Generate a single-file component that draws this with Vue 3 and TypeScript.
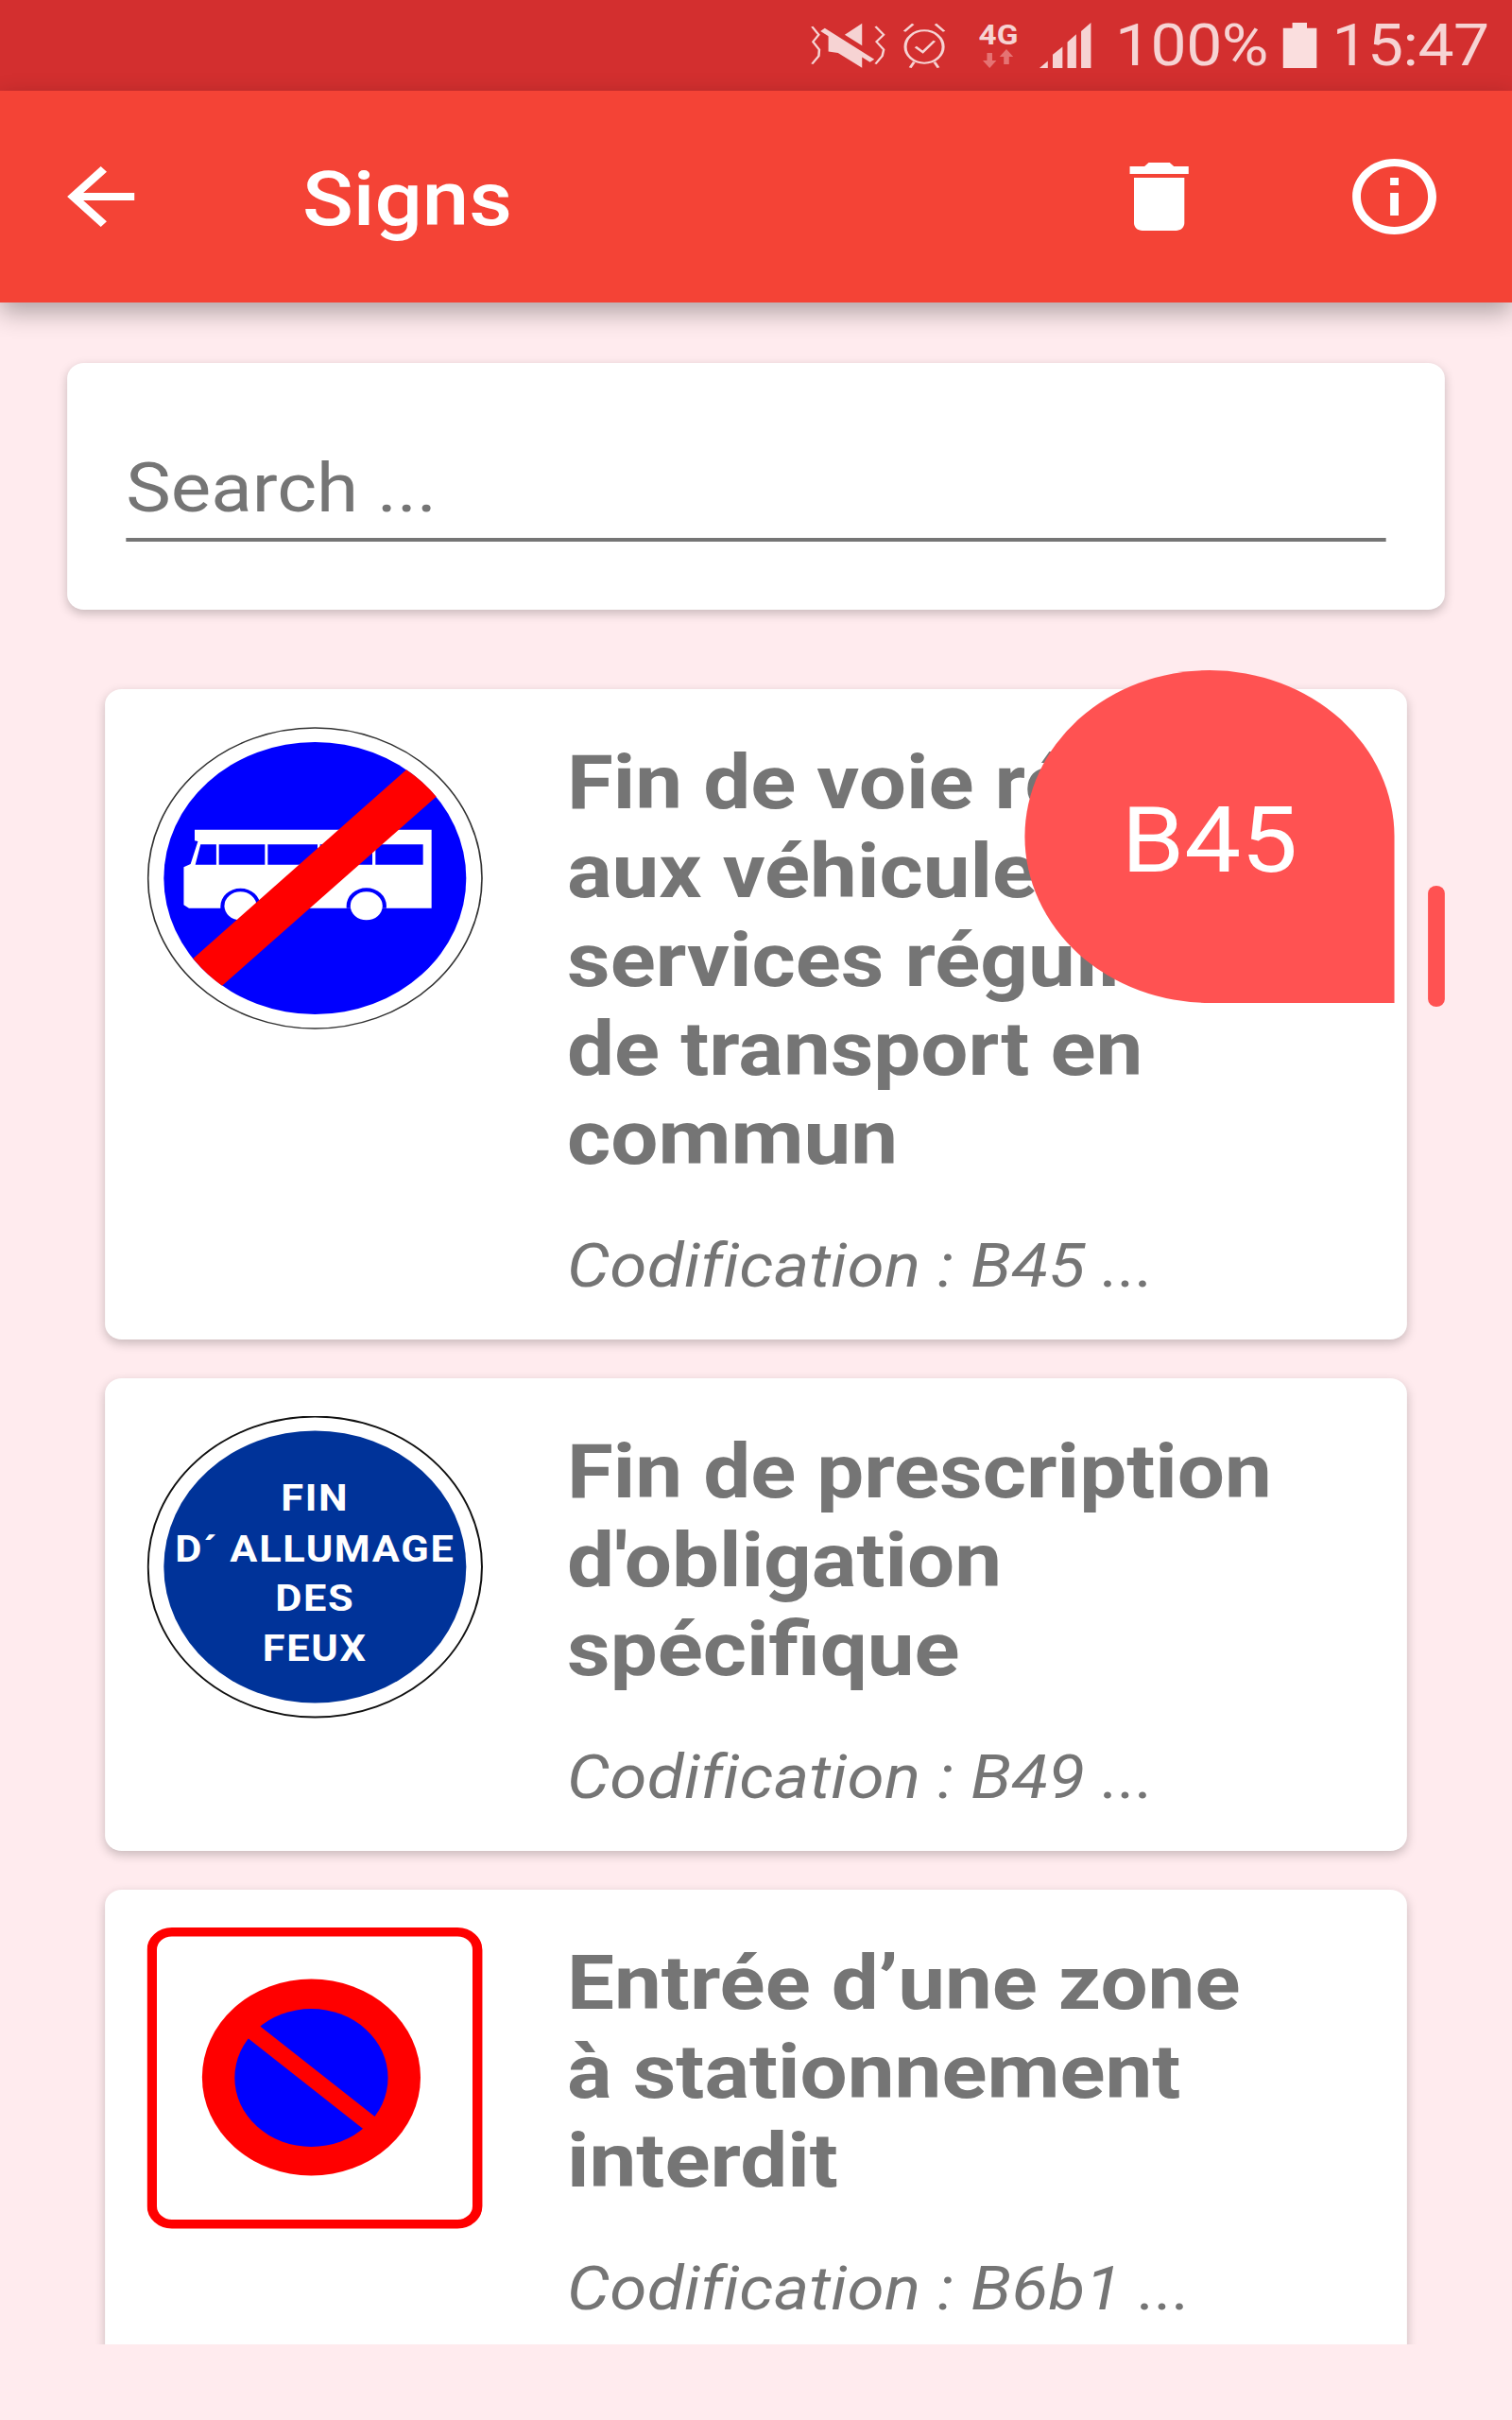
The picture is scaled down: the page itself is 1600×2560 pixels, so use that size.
<script setup lang="ts">
interface Sign {
  id: string
  kind: 'bus' | 'feux' | 'parking'
  lines: string[]
  code: string
}

const SIGNS: Sign[] = [
  {
    id: 'b45', kind: 'bus',
    lines: ['Fin de voie réservée', 'aux véhicules des', 'services réguliers', 'de transport en', 'commun'],
    code: 'Codification : B45 ...',
  },
  {
    id: 'b49', kind: 'feux',
    lines: ['Fin de prescription', "d'obligation", 'spécifique'],
    code: 'Codification : B49 ...',
  },
  {
    id: 'b6b1', kind: 'parking',
    lines: ['Entrée d’une zone', 'à stationnement', 'interdit'],
    code: 'Codification : B6b1 ...',
  },
]
</script>

<template>
  <div class="screen">
    <!-- Android status bar -->
    <div class="status">
      <svg class="st-mute" viewBox="115 70 155 143" preserveAspectRatio="none">
        <path class="st-line st-zig" d="M118 82l14 26-12 22 13 25-1 20-14 25M250 82l17 26-15 22 15 25-3 20-14 25" />
        <path class="st-fill" d="M222 72v70l-36-34zM152 104l70 68v40l-50-47-20-4z" />
        <path class="st-slash" d="M140 92l103 98" />
      </svg>
      <svg class="st-alarm" viewBox="305 68 93 145" preserveAspectRatio="none">
        <ellipse class="st-line" cx="351" cy="145" rx="39" ry="52" />
        <path class="st-line" d="M333 145l15 17 24-36M310 96l18-24M392 96l-18-24M330 194l-8 18M372 194l8 18" />
      </svg>
      <svg class="st-net" viewBox="0 0 39 50">
        <text x="0" y="24" class="st-4g">4G</text>
        <path class="st-dim" d="M8 33h5v8h4l-6.500 8-6.500-8h4zM24 45h5v-8h4l-6.500-8-6.500 8h4z" />
      </svg>
      <svg class="st-signal" viewBox="590 68 105 145" preserveAspectRatio="none">
        <path class="st-fill" d="M590 213l17-23v23zM617 213v-43l20-25v68zM647 213v-83l18-25v108zM675 213V95l20-27v145z" />
      </svg>
      <span class="st-pct">100%</span>
      <svg class="st-batt" viewBox="1083 68 69 145" preserveAspectRatio="none">
        <path class="st-batt-fill" d="M1102 68h30v17h20v128h-69V85h19z" />
      </svg>
      <span class="st-time">15:47</span>
    </div>

    <!-- Toolbar -->
    <div class="toolbar">
      <svg class="tb-icon tb-back" viewBox="0 0 24 24"><path d="M20 11H7.830l5.590-5.590L12 4l-8 8 8 8 1.410-1.410L7.830 13H20v-2z" /></svg>
      <div class="tb-title">Signs</div>
      <div class="tb-space"></div>
      <svg class="tb-icon" viewBox="0 0 24 24"><path d="M6 19c0 1.100.9 2 2 2h8c1.100 0 2-.9 2-2V7H6v12zM19 4h-3.500l-1-1h-5l-1 1H5v2h14V4z" /></svg>
      <svg class="tb-icon tb-info" viewBox="0 0 24 24"><path d="M11 7h2v2h-2zm0 4h2v6h-2zm1-9C6.480 2 2 6.480 2 12s4.480 10 10 10 10-4.480 10-10S17.520 2 12 2zm0 18c-4.410 0-8-3.590-8-8s3.590-8 8-8 8 3.590 8 8-3.590 8-8 8z" /></svg>
    </div>

    <div class="content">
      <div class="search-card">
        <input class="search-input" placeholder="Search ..." />
      </div>

      <div class="list">
        <div v-for="s in SIGNS" :key="s.id" class="card">
          <svg class="sign" viewBox="0 0 320 320">
            <g v-if="s.kind === 'bus'">
              <circle cx="160" cy="160" r="159" fill="#fff" stroke="#333" stroke-width="1.500" />
              <circle cx="160" cy="160" r="144" fill="#0000ff" />
              <path fill="#fff" d="M45.400 108.700H271v83H108v-2a19 19 0 0 0-38 0v2H40l-5-3.400v-40l6.500-3.300 7-24-3.100-.7z" />
              <path fill="#0000ff" d="M51 124.300h15v21.400H46zM68.500 124.300h43.800v21.400H68.500zM115 124.300h47.400v21.400H115zM164.800 124.300h49.800v21.400h-49.800zM217.600 124.300h45.300v21.400h-45.300z" />
              <path fill="#0000ff" d="M190 191.700v-2.400a19 19 0 0 1 38 0v2.400z" />
              <ellipse cx="89" cy="189.300" rx="15.300" ry="15" fill="#fff" />
              <ellipse cx="209" cy="189.300" rx="15.300" ry="15" fill="#fff" />
              <path fill="#ff0000" d="M247 45.300A144 144 0 0 1 275.500 73.700L71.500 273.700A144 144 0 0 1 43.900 245z" />
            </g>
            <g v-else-if="s.kind === 'feux'">
              <circle cx="160" cy="159.500" r="159" fill="#fff" stroke="#111" stroke-width="1.800" />
              <circle cx="160" cy="159.500" r="144" fill="#003399" />
              <text class="sign-text" x="160" y="100">FIN</text>
              <text class="sign-text" x="160" y="154">D´ ALLUMAGE</text>
              <text class="sign-text" x="160" y="206">DES</text>
              <text class="sign-text" x="160" y="259">FEUX</text>
            </g>
            <g v-else>
              <rect x="4.700" y="4.700" width="310" height="309" rx="19" fill="#fff" stroke="#ff0000" stroke-width="9.400" />
              <circle cx="156.500" cy="158.500" r="104" fill="#ff0000" />
              <circle cx="156.500" cy="159" r="73" fill="#0000ff" />
              <path d="M85 96l143 125" stroke="#ff0000" stroke-width="17" />
            </g>
          </svg>
          <div class="card-text">
            <div class="card-title">
              <div v-for="line in s.lines" :key="line">{{ line }}</div>
            </div>
            <div class="card-code">{{ s.code }}</div>
          </div>
        </div>
      </div>

      <!-- fast scroller -->
      <div class="bubble">B45</div>
      <div class="thumb"></div>
    </div>
  </div>
</template>

<style scoped>
/* the app is drawn at 1440 wide and stretched to the 1600 window */
.screen { width: 1440px; height: 2560px; background: #ffebee; font-family: Roboto, sans-serif; transform: scaleX(1.1111); transform-origin: 0 0; }

.status { height: 96px; background: #d32f2f; display: flex; align-items: center; justify-content: flex-end; padding-right: 22px; box-sizing: border-box; color: #f6d3d3; position: relative; }
.status svg { display: block; flex: none; overflow: visible; }
.st-line { fill: none; stroke: #f6d3d3; stroke-width: 6; }
.st-zig { stroke-width: 5; }
.st-fill { fill: #f6d3d3; }
.st-slash { fill: none; stroke: #f6d3d3; stroke-width: 13; }
.st-mute { width: 71px; height: 48px; }
.st-alarm { width: 43px; height: 48px; margin-left: 16px; }
.st-net { width: 39px; height: 50px; margin-left: 30px; }
.st-4g { font-family: Roboto, sans-serif; font-weight: 700; font-size: 30px; fill: #f6d3d3; }
.st-dim { fill: #e57373; }
.st-signal { width: 49px; height: 48px; margin-left: 19px; }
.st-pct { font-size: 61px; line-height: 72px; margin-left: 23px; letter-spacing: -0.5px; font-weight: 400; }
.st-batt { width: 32px; height: 48px; margin-left: 14px; }
.st-batt-fill { fill: #fadede; }
.st-time { font-size: 61px; line-height: 72px; margin-left: 15px; letter-spacing: -0.5px; font-weight: 400; }

.toolbar { height: 224px; background: #f44336; display: flex; align-items: center; padding: 0 64px 0 48px; box-sizing: border-box; position: relative; z-index: 2; box-shadow: 0 10px 24px rgba(0, 0, 0, 0.32); }
.tb-icon { width: 96px; height: 96px; fill: #fff; flex: none; }
.tb-title { margin-left: 144px; padding-top: 6px; font-size: 80px; font-weight: 500; color: #fff; }
.tb-space { flex: 1; }
.tb-info { margin-left: 128px; }

.content { height: 2160px; overflow: hidden; position: relative; }
.search-card { margin: 64px 64px 0; padding: 90px 56px 72px; background: #fff; border-radius: 16px; box-shadow: 0 4px 10px rgba(0, 0, 0, 0.22); }
.search-input { display: block; width: 100%; box-sizing: border-box; border: none; border-bottom: 4px solid #757575; outline: none; padding: 0 0 10px; font-family: Roboto, sans-serif; font-size: 72px; color: #757575; background: transparent; border-radius: 0; }
.search-input::placeholder { color: #757575; opacity: 1; }

.list { margin: 84px 100px 0; display: flex; flex-direction: column; gap: 41px; }
.card { display: flex; padding: 40px 40px 40px; background: #fff; border-radius: 16px; box-shadow: 0 4px 10px rgba(0, 0, 0, 0.22); flex: none; }
.sign { width: 320px; height: 320px; flex: none; display: block; }
.sign-text { font-family: Roboto, sans-serif; font-weight: 700; font-size: 39px; fill: #fff; text-anchor: middle; letter-spacing: 1.500px; }
.card-text { margin-left: 80px; padding-top: 12px; color: #757575; min-width: 0; }
.card-title { font-size: 80px; font-weight: 700; line-height: 94px; white-space: nowrap; }
.card-code { margin-top: 51px; font-size: 64px; line-height: 75px; font-style: italic; white-space: nowrap; letter-spacing: 0.25px; }

.bubble { position: absolute; left: 976px; top: 389px; width: 352px; height: 352px; box-sizing: border-box; padding-top: 8px; border-radius: 176px 176px 0 176px; background: #ff5252; color: #fff; font-size: 96px; display: flex; align-items: center; justify-content: center; }
.thumb { position: absolute; left: 1360px; top: 617px; width: 16px; height: 128px; border-radius: 8px; background: #ff5252; }
</style>

<style>
html, body { background: #ffebee; overflow: hidden; }
</style>
